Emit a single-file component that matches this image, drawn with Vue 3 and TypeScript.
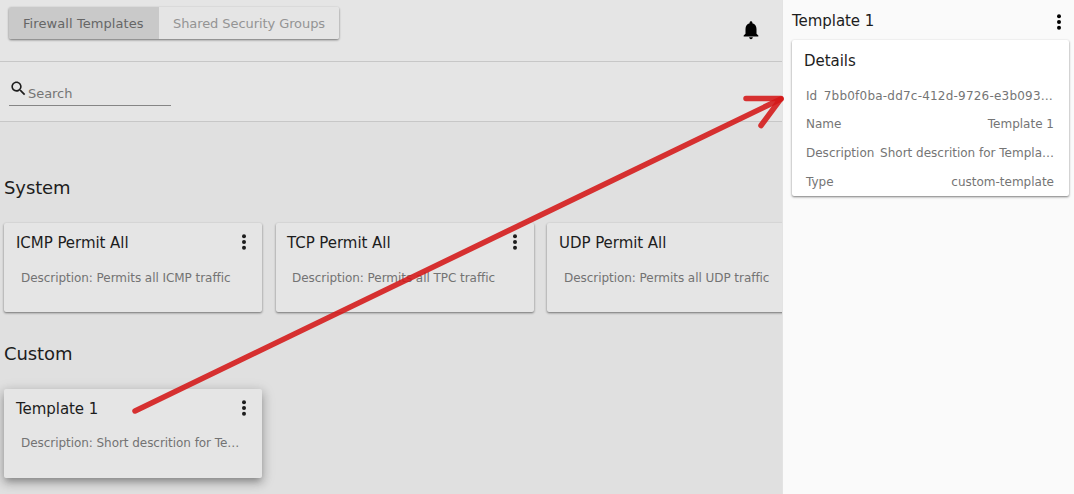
<script setup lang="ts">
interface Template {
  name: string
  description: string
  raised?: boolean
}
interface Section {
  title: string
  items: Template[]
}
interface Detail {
  label: string
  value: string
  wide?: boolean
}

const sections: Section[] = [
  {
    title: 'System',
    items: [
      { name: 'ICMP Permit All', description: 'Permits all ICMP traffic' },
      { name: 'TCP Permit All', description: 'Permits all TPC traffic' },
      { name: 'UDP Permit All', description: 'Permits all UDP traffic' },
    ],
  },
  {
    title: 'Custom',
    items: [{ name: 'Template 1', description: 'Short descrition for Te…', raised: true }],
  },
]

const details: Detail[] = [
  { label: 'Id', value: '7bb0f0ba-dd7c-412d-9726-e3b093…', wide: true },
  { label: 'Name', value: 'Template 1' },
  { label: 'Description', value: 'Short descrition for Templa…' },
  { label: 'Type', value: 'custom-template' },
]
</script>

<template>
  <div class="page">
    <main class="main">
      <header class="top">
        <div class="toggle">
          <button class="tab active">Firewall Templates</button>
          <button class="tab">Shared Security Groups</button>
        </div>
        <svg class="bell" viewBox="0 0 24 24">
          <path d="M12 22c1.1 0 2-.9 2-2h-4c0 1.1.9 2 2 2zm6-6v-5c0-3.07-1.64-5.64-4.5-6.32V4c0-.83-.67-1.5-1.5-1.5s-1.5.67-1.5 1.5v.68C7.63 5.36 6 7.92 6 11v5l-2 2v1h16v-1l-2-2z" />
        </svg>
      </header>
      <div class="filter">
        <div class="search">
          <svg class="glass" viewBox="0 0 24 24">
            <path d="M15.5 14h-.79l-.28-.27C15.41 12.59 16 11.11 16 9.5 16 5.91 13.09 3 9.5 3S3 5.91 3 9.5 5.91 16 9.5 16c1.61 0 3.09-.59 4.23-1.57l.27.28v.79l5 4.99L20.49 19l-4.99-5zm-6 0C7.01 14 5 11.99 5 9.500S7.01 5 9.500 5 14 7.01 14 9.500 11.99 14 9.500 14z" />
          </svg>
          <span class="placeholder">Search</span>
        </div>
      </div>
      <section v-for="s in sections" :key="s.title" class="section">
        <h2 class="heading">{{ s.title }}</h2>
        <div class="cards">
          <article v-for="t in s.items" :key="t.name" class="card" :class="{ raised: t.raised }">
            <div class="card-head">
              <h3 class="title">{{ t.name }}</h3>
              <svg class="dots" viewBox="0 0 6 16">
                <circle cx="3" cy="2.3" r="2" /><circle cx="3" cy="8" r="2" /><circle cx="3" cy="13.7" r="2" />
              </svg>
            </div>
            <p class="desc">Description: {{ t.description }}</p>
          </article>
        </div>
      </section>
    </main>
    <aside class="side">
      <div class="side-head">
        <h3 class="title">Template 1</h3>
        <svg class="dots" viewBox="0 0 6 16">
          <circle cx="3" cy="2.3" r="2" /><circle cx="3" cy="8" r="2" /><circle cx="3" cy="13.7" r="2" />
        </svg>
      </div>
      <div class="panel">
        <h3 class="title">Details</h3>
        <dl class="rows">
          <div v-for="d in details" :key="d.label" class="row" :class="{ wide: d.wide }">
            <dt>{{ d.label }}</dt>
            <dd>{{ d.value }}</dd>
          </div>
        </dl>
      </div>
    </aside>
    <svg class="arrow" viewBox="0 0 1074 494">
      <path d="M135 411 781 99" />
      <path d="M746 98.5H781L761 125.5" />
    </svg>
  </div>
</template>

<style>
body {
  margin: 0;
  overflow: hidden;
}
</style>

<style scoped>
.page {
  position: relative;
  display: flex;
  width: 1074px;
  height: 494px;
  overflow: hidden;
  background: #fafafa;
  color: #1d1d1d;
  font-family: "DejaVu Sans", sans-serif;
  white-space: nowrap;
}
.page * {
  box-sizing: border-box;
}
h2, h3, p, dl, dd {
  margin: 0;
  font-weight: 400;
}
.main {
  width: 783px;
  flex: none;
  overflow: hidden;
  background: #e0e0e0;
  border-right: 1px solid #e3e3e3;
}
.top {
  display: flex;
  justify-content: space-between;
  height: 62px;
  padding: 7px 20px 0 9px;
  background: #e5e5e5;
  border-bottom: 1px solid #c7c7c7;
}
.toggle {
  display: flex;
  height: 32px;
  border-radius: 2px;
  box-shadow: 0 1px 2px rgba(0, 0, 0, .35), 0 1px 3px rgba(0, 0, 0, .2);
}
.tab {
  width: 180px;
  padding: 2px 0 0 14px;
  border: 0;
  border-radius: 0 2px 2px 0;
  background: #e5e5e5;
  color: #949494;
  font: 13px/30px "DejaVu Sans", sans-serif;
  letter-spacing: -.08px;
  text-align: left;
}
.tab.active {
  width: 150px;
  border-radius: 2px 0 0 2px;
  background: #c9c9c9;
  color: #666;
  letter-spacing: .08px;
}
.bell {
  width: 22px;
  height: 22px;
  margin-top: 12px;
  fill: #000;
}
.filter {
  height: 60px;
  padding: 16px 9px 0;
  background: #e5e5e5;
  border-bottom: 1px solid #c7c7c7;
}
.search {
  display: flex;
  width: 162px;
  height: 28px;
  border-bottom: 1px solid #858585;
}
.glass {
  width: 19px;
  height: 19px;
  margin-top: 1px;
  fill: #1d1d1d;
}
.placeholder {
  padding-top: 7px;
  color: #757575;
  font-size: 13px;
  line-height: 18px;
  letter-spacing: -.05px;
}
.section {
  padding-left: 4px;
}
.section:nth-of-type(1) {
  padding-top: 54px;
}
.section + .section {
  padding-top: 30px;
}
.heading {
  height: 47px;
  font-size: 18px;
  line-height: 24px;
  letter-spacing: -.1px;
}
.cards {
  display: flex;
  gap: 13.5px;
}
.card {
  flex: none;
  width: 258px;
  height: 89px;
  padding: 9px 15px 0 12px;
  border-radius: 2px;
  background: #e5e5e5;
  box-shadow: 0 1px 2px rgba(0, 0, 0, .35), 0 1px 3px rgba(0, 0, 0, .2);
}
.card:nth-child(2) {
  padding: 9px 15.5px 0 11.5px;
}
.card.raised {
  box-shadow: 0 5px 6px -3px rgba(0, 0, 0, .2), 0 4px 10px 1px rgba(0, 0, 0, .2), 0 3px 14px 2px rgba(0, 0, 0, .1);
}
.card-head, .side-head {
  display: flex;
  justify-content: space-between;
}
.title {
  font-size: 15px;
  line-height: 22px;
  letter-spacing: -.05px;
}
.dots {
  width: 6px;
  height: 16px;
  margin-top: 2px;
  fill: #1d1d1d;
}
.desc {
  padding: 15px 0 0 5px;
  color: #737373;
  font-size: 12px;
  line-height: 18px;
  letter-spacing: -.05px;
}
.raised .desc {
  padding-top: 14px;
}
.side {
  flex: none;
  width: 291px;
  padding: 10px 5px 0 9px;
}
.side-head {
  height: 30px;
  padding-right: 7px;
}
.side-head .dots {
  margin-top: 4px;
  fill: #000;
}
.panel {
  height: 156px;
  padding: 10px 15px 0 12px;
  border-radius: 2px;
  background: #fff;
  box-shadow: 0 1px 2px rgba(0, 0, 0, .35), 0 1px 3px rgba(0, 0, 0, .2);
}
.rows {
  padding: 15px 0 0 2px;
}
.row {
  display: flex;
  justify-content: space-between;
  height: 29px;
  color: #757575;
  font-size: 12px;
  line-height: 18px;
}
.row.wide {
  height: 28px;
  padding-right: 1px;
}
.wide dd {
  letter-spacing: .21px;
}
.arrow {
  position: absolute;
  inset: 0;
  width: 1074px;
  height: 494px;
  fill: none;
  stroke: #d41717;
  stroke-opacity: .88;
  stroke-width: 5.5;
  stroke-linecap: round;
  stroke-linejoin: round;
}
</style>
